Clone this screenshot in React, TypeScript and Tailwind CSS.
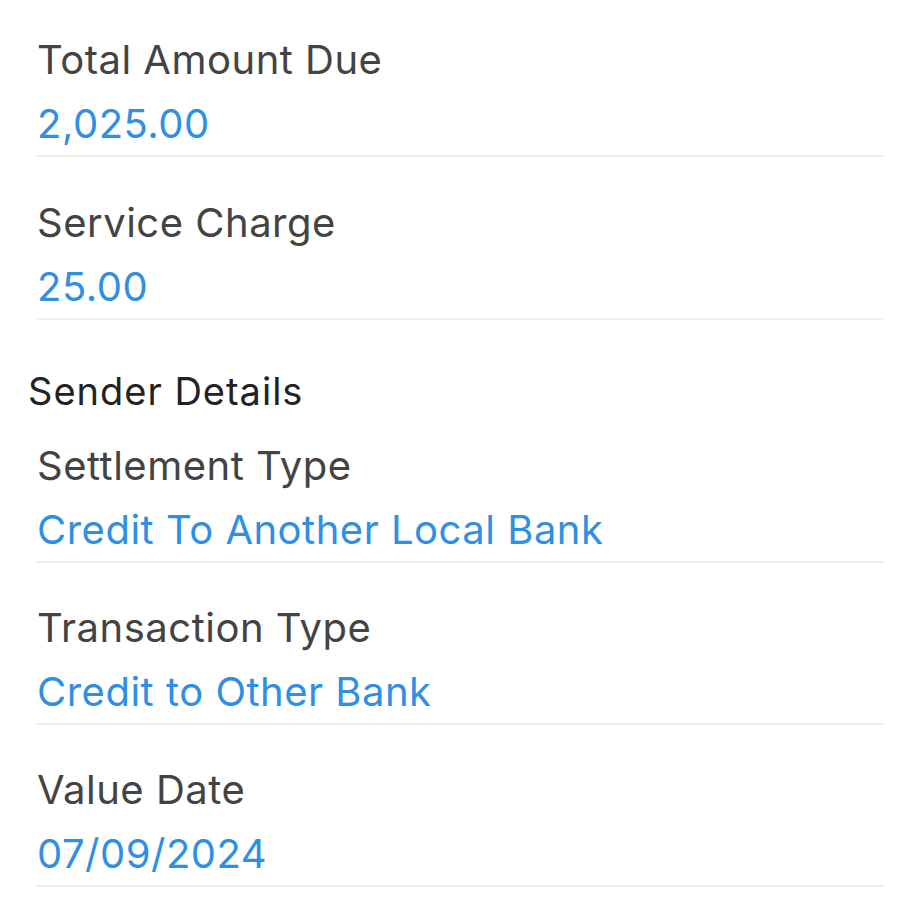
type Item = { label: string; value: string };

function Row({ item, pt }: { item: Item; pt: string }) {
  return (
    <div className={`${pt} pb-[11px] border-b-2 border-[#eeeeee]`}>
      <div className="text-[40px] leading-[40px] tracking-[0.5px] text-[#434343] whitespace-nowrap">{item.label}</div>
      <div className="mt-[24px] text-[40px] leading-[40px] tracking-[0.5px] text-[#2f8fe3] whitespace-nowrap">{item.value}</div>
    </div>
  );
}

export default function App() {
  const top: Item[] = [
    { label: "Total Amount Due", value: "2,025.00" },
    { label: "Service Charge", value: "25.00" },
  ];
  const sender: Item[] = [
    { label: "Settlement Type", value: "Credit To Another Local Bank" },
    { label: "Transaction Type", value: "Credit to Other Bank" },
    { label: "Value Date", value: "07/09/2024" },
  ];
  return (
    <div className="w-[920px] h-[920px] bg-white overflow-hidden" style={{ fontFamily: "Inter, 'Noto Sans', sans-serif" }}>
      <div className="ml-[37px] w-[846px]">
        <Row item={top[0]} pt="pt-[40px]" />
        <Row item={top[1]} pt="pt-[46px]" />
      </div>
      <div className="ml-[28px] mt-[52px] text-[38px] leading-[38px] tracking-[1px] text-[#222222] whitespace-nowrap">Sender Details</div>
      <div className="ml-[37px] w-[846px]">
        <Row item={sender[0]} pt="pt-[36px]" />
        <Row item={sender[1]} pt="pt-[45px]" />
        <Row item={sender[2]} pt="pt-[45px]" />
      </div>
    </div>
  );
}
